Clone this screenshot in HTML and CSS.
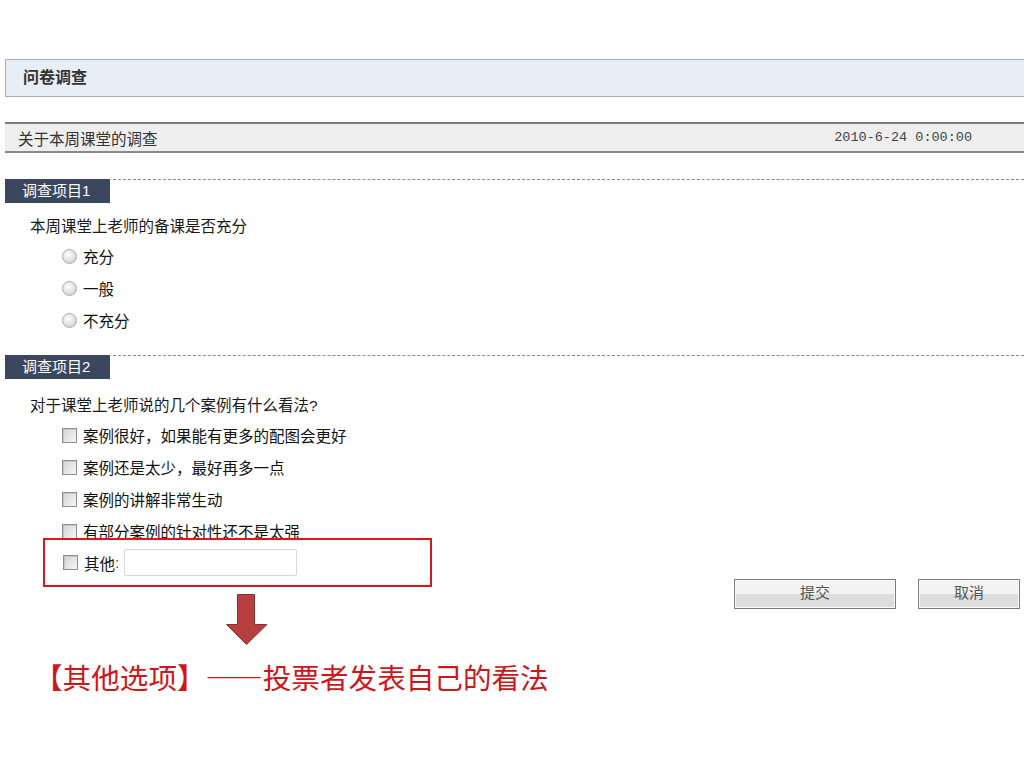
FILE: index.html
```html
<!DOCTYPE html>
<html lang="zh-CN">
<head>
    <meta charset="UTF-8">
    <title>问卷调查</title>
    <link rel="stylesheet" href="styles.css">
</head>
<body>
<div class="page">
    <div class="panel-title">问卷调查</div>

    <div class="survey-head">
        <span>关于本周课堂的调查</span>
        <span class="date">2010-6-24 0:00:00</span>
    </div>

    <div class="section first">
        <div class="section-head">
            <span class="section-label">调查项目1</span>
            <span class="section-line"></span>
        </div>
        <p class="question">本周课堂上老师的备课是否充分</p>
        <ul class="options">
            <li><span class="radio"></span>充分</li>
            <li><span class="radio"></span>一般</li>
            <li><span class="radio"></span>不充分</li>
        </ul>
    </div>

    <div class="section second">
        <div class="section-head">
            <span class="section-label">调查项目2</span>
            <span class="section-line"></span>
        </div>
        <p class="question">对于课堂上老师说的几个案例有什么看法?</p>
        <ul class="options">
            <li><span class="check"></span>案例很好，如果能有更多的配图会更好</li>
            <li><span class="check"></span>案例还是太少，最好再多一点</li>
            <li><span class="check"></span>案例的讲解非常生动</li>
            <li><span class="check"></span>有部分案例的针对性还不是太强</li>
        </ul>
        <div class="other-row">
            <span class="check"></span>其他<span class="colon">:</span>
            <input type="text" class="other-input">
        </div>
    </div>

    <div class="footer">
        <div class="note">
            <svg class="arrow" width="42" height="52" viewBox="0 0 42 52">
                <path d="M11.5 0.5 H28.5 V30.5 H41 L20.5 50.5 L0.5 30.5 H11.5 Z" fill="#b5403f" stroke="#8e2f2f" stroke-width="1"/>
            </svg>
            <p class="note-text">【其他选项】——投票者发表自己的看法</p>
        </div>
        <div class="actions">
            <button class="btn btn-submit">提交</button>
            <button class="btn btn-cancel">取消</button>
        </div>
    </div>
</div>
</body>
</html>
```

FILE: styles.css
```css
body {
    margin: 0;
    background-color: white;
    font-family: "Liberation Sans", "Noto Sans CJK SC", sans-serif;
    font-size: 15.5px;
    color: #1a1a1a;
}

.page {
    width: 1024px;
    height: 768px;
    overflow: hidden;
    padding-top: 59px;
    box-sizing: border-box;
}

.panel-title {
    margin-left: 5px;
    height: 36px;
    line-height: 36px;
    padding-left: 17px;
    background-color: #e8eef6;
    border: 1px solid #a7b1bb;
    border-right: none;
    font-size: 16px;
    font-weight: bold;
    color: #333;
}

.survey-head {
    margin: 25px 0 0 5px;
    height: 27px;
    padding: 0 52px 0 13px;
    display: flex;
    align-items: center;
    justify-content: space-between;
    background-color: #eeeeee;
    border-top: 2px solid #7d7d7d;
    border-bottom: 2px solid #8a8a8a;
    color: #333;
}

.date {
    font-family: "Liberation Mono", monospace;
    font-size: 13.5px;
    color: #444;
}

.section.first {
    margin-top: 26px;
}

.section.second {
    margin-top: 19px;
}

.section-head {
    display: flex;
    align-items: flex-start;
    margin-left: 5px;
}

.section-label {
    width: 105px;
    height: 24px;
    line-height: 24px;
    padding-left: 17px;
    box-sizing: border-box;
    background-color: #3b475e;
    color: white;
    font-size: 15px;
}

.section-line {
    flex: 1;
    margin-left: 3px;
    border-top: 1px dashed #8a8a8a;
}

.question {
    margin: 11px 0 0 30px;
    height: 26px;
    line-height: 26px;
}

.second .question {
    margin-top: 14px;
}

.options {
    list-style: none;
    margin: 0;
    padding-left: 62px;
}

.options li {
    height: 32px;
    display: flex;
    align-items: center;
    gap: 6px;
    color: #111;
}

.radio {
    width: 13px;
    height: 13px;
    border-radius: 50%;
    border: 1px solid #ababab;
    background: radial-gradient(circle at 40% 35%, #ffffff, #d6d6d6 70%);
}

.check {
    width: 13px;
    height: 13px;
    border: 1px solid #8f8f8f;
    background: linear-gradient(135deg, #d3d3d3, #f7f7f7);
    box-shadow: inset 1px 1px 0 #c6c6c6;
}

.other-row {
    position: relative;
    margin: -9px 0 0 43px;
    width: 389px;
    height: 49px;
    box-sizing: border-box;
    border: 2px solid #e0141b;
    background-color: white;
    padding-left: 18px;
    display: flex;
    align-items: center;
    gap: 6px;
    color: #111;
}

.other-row .colon {
    margin-left: -6px;
    color: #555;
}

.other-input {
    width: 173px;
    height: 27px;
    box-sizing: border-box;
    margin-left: -1px;
    border: 1px solid #d6d6d6;
    border-radius: 2px;
}

.footer {
    margin-top: -8px;
    display: flex;
    justify-content: space-between;
    align-items: flex-start;
}

.note {
    padding-top: 15px;
}

.arrow {
    display: block;
    margin-left: 226px;
}

.note-text {
    margin: 13px 0 0 34px;
    font-family: "Noto Sans CJK SC", sans-serif;
    font-size: 28.6px;
    line-height: 36px;
    color: #d0161b;
}

.actions {
    display: flex;
    gap: 22px;
    margin-right: 4px;
}

.btn {
    height: 30px;
    border: 1px solid #7b7b7b;
    background: linear-gradient(#f3f3f3 0, #f3f3f3 50%, #dddddd 50%, #dddddd 100%);
    box-shadow: inset 0 0 0 1px #fafafa;
    font-family: "Noto Sans CJK SC", sans-serif;
    font-size: 15px;
    line-height: 24px;
    color: #555;
    padding: 0 0 4px 0;
}

.btn-submit {
    width: 162px;
}

.btn-cancel {
    width: 102px;
}
```
